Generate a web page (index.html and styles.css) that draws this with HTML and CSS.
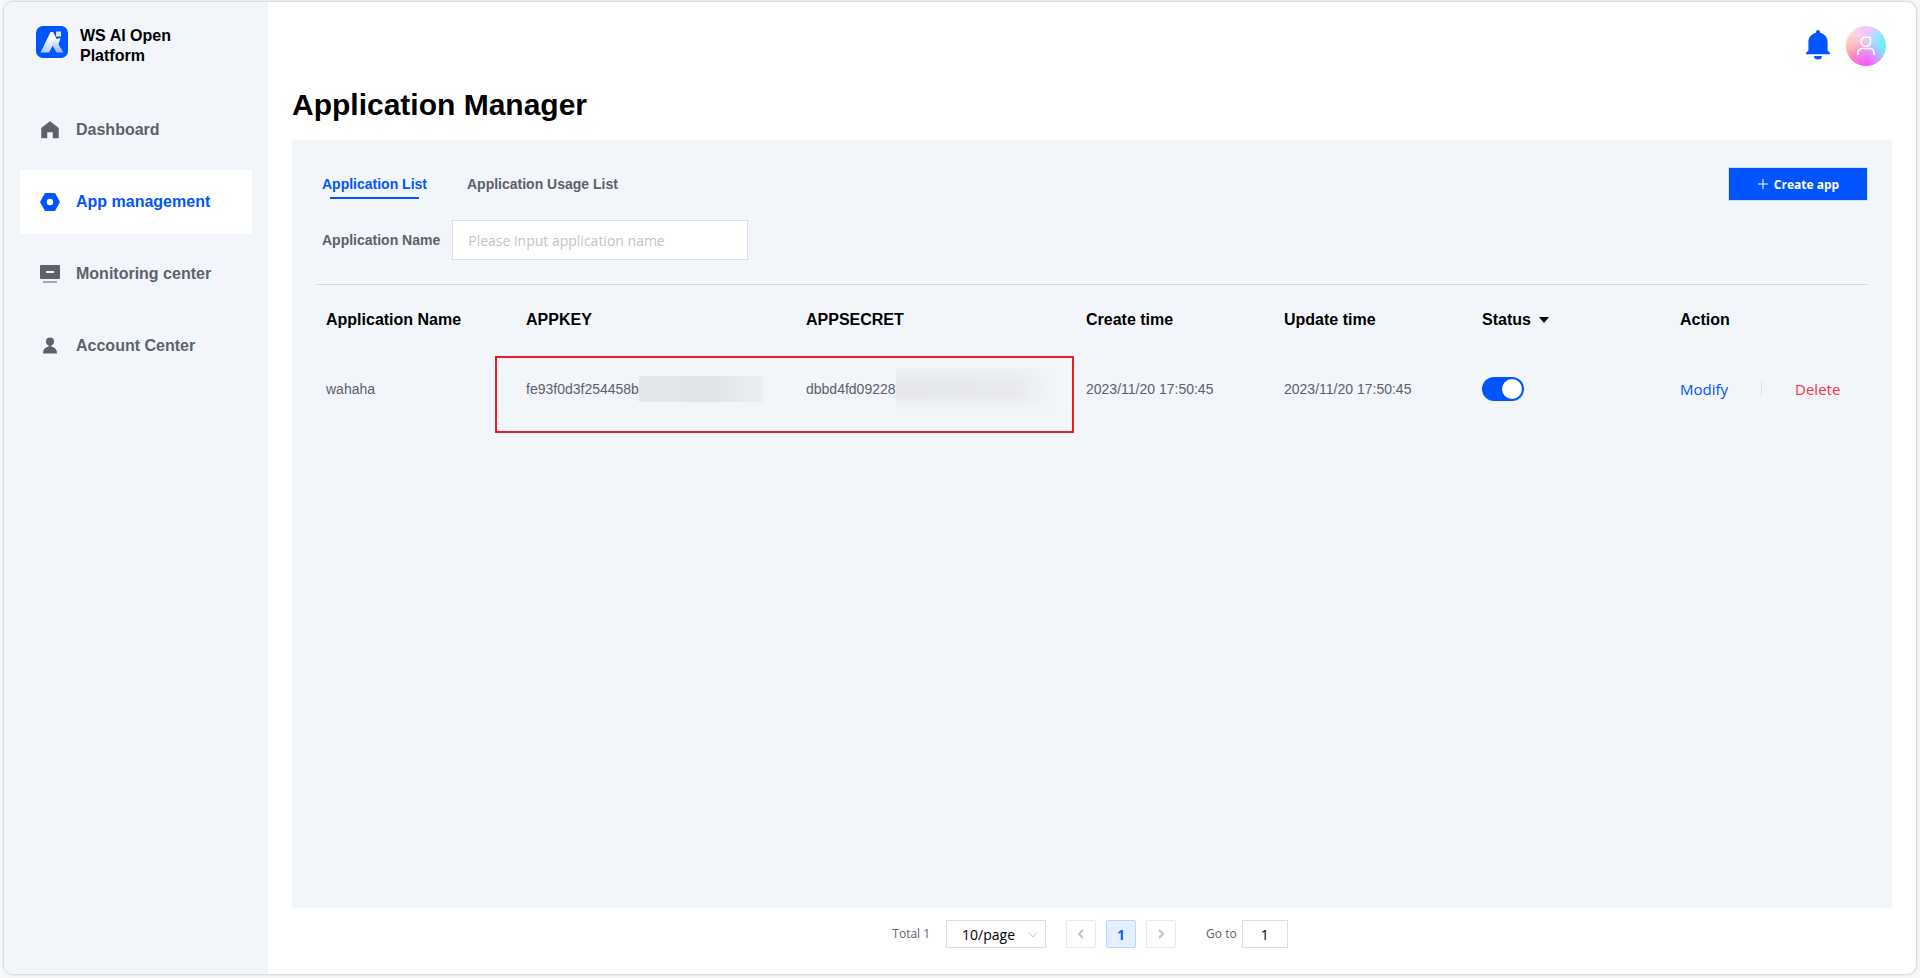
FILE: index.html
```html
<!DOCTYPE html>
<html lang="en">
<head>
<meta charset="utf-8">
<title>Application Manager</title>
<link rel="stylesheet" href="styles.css">
</head>
<body>
<div class="frame">
  <aside class="sidebar">
    <div class="brand">
      <svg class="brand-logo" viewBox="0 0 32 32" aria-hidden="true">
        <defs>
          <linearGradient id="peak" x1="0.8" y1="0" x2="0.2" y2="1">
            <stop offset="0.3" stop-color="#fff"/>
            <stop offset="1" stop-color="#a9c5ff"/>
          </linearGradient>
          <linearGradient id="leg" x1="0" y1="0" x2="0" y2="1">
            <stop offset="0" stop-color="#fff"/>
            <stop offset="1" stop-color="#8fb4ff"/>
          </linearGradient>
        </defs>
        <rect width="32" height="32" rx="7" fill="#05f"/>
        <path d="M14.500 6h2.500l3.500 6.500L17 19l-4 7.500H4.500z" fill="url(#peak)"/>
        <path d="M24.500 12L22.500 18.500l5 8h-7L15.500 18l2-4z" fill="url(#leg)"/>
        <rect x="20" y="5.500" width="5" height="5" fill="#d9e6ff"/>
      </svg>
      <div class="brand-name">WS AI Open Platform</div>
    </div>
    <nav class="nav">
      <a class="nav-item" href="#">
        <svg class="nav-icon" viewBox="0 0 20 20" aria-hidden="true"><path d="M10 1.500l8.500 6.500v10h-5.500v-6h-6v6H1.500V8z" fill="#5c616b" stroke="#5c616b" stroke-width="0.500" stroke-linejoin="round"/></svg>
        Dashboard
      </a>
      <a class="nav-item nav-item-active" href="#">
        <svg class="nav-icon" viewBox="0 0 20 20" aria-hidden="true"><path fill-rule="evenodd" d="M5 1h10l5 9-5 9H5l-5-9zM10 6.800a3.200 3.200 0 1 0 0 6.400 3.200 3.200 0 0 0 0-6.400z" fill="#05f"/></svg>
        App management
      </a>
      <a class="nav-item" href="#">
        <svg class="nav-icon" viewBox="0 0 20 20" aria-hidden="true"><path fill-rule="evenodd" d="M1 1h18a1 1 0 0 1 1 1v12a1 1 0 0 1-1 1H1a1 1 0 0 1-1-1V2a1 1 0 0 1 1-1zM6 7v2h8V7z" fill="#5c616b"/><rect x="3" y="17" width="14" height="2" fill="#a3a7b0"/></svg>
        Monitoring center
      </a>
      <a class="nav-item" href="#">
        <svg class="nav-icon" viewBox="0 0 20 20" aria-hidden="true"><circle cx="10" cy="5.500" r="4" fill="#5c616b"/><path d="M9 8h2l.5 2.500c3.500 1 5.500 3 5.500 7H3c0-4 2-6 5.500-7z" fill="#5c616b"/></svg>
        Account Center
      </a>
    </nav>
  </aside>

  <main class="main">
    <header class="topbar">
      <button class="icon-button" type="button" aria-label="Notifications">
        <svg class="bell" viewBox="0 0 24 32" aria-hidden="true"><path d="M10 2a2 2 0 0 1 4 0v.8c4.500 1 7.600 4.600 7.600 9.200v8.500L24 23v1.300H0V23l2.400-2.500V12c0-4.600 3.100-8.200 7.600-9.200z" fill="#05f"/><path d="M8 26h8a4 3.500 0 0 1-8 0z" fill="#05f"/></svg>
      </button>
      <button class="icon-button avatar" type="button" aria-label="Account">
        <svg class="avatar-icon" viewBox="0 0 18 20" fill="none" stroke="#fff" stroke-width="1.500" aria-hidden="true"><path d="M4 5.500A4.500 4.500 0 0 1 8.500 1.200H13.500V5.500A4.700 4.700 0 0 1 4 5.500z"/><path d="M1 19v-2.500a4 4 0 0 1 4-4h8a4 4 0 0 1 4 4V19"/></svg>
      </button>
    </header>

    <h1 class="title">Application Manager</h1>

    <section class="panel">
      <div class="panel-head">
        <div class="tabs">
          <a class="tab tab-active" href="#">Application List</a>
          <a class="tab" href="#">Application Usage List</a>
        </div>
        <button class="create" type="button">
          <svg class="plus" viewBox="0 0 12 12" aria-hidden="true"><path d="M6 1v10M1 6h10" stroke="#fff"/></svg>
          Create app
        </button>
      </div>
      <div class="filter">
        <label class="filter-label" for="app-name">Application Name</label>
        <input class="filter-input" id="app-name" type="text" placeholder="Please input application name">
      </div>

      <table class="table">
        <colgroup>
          <col class="col-name"><col class="col-key"><col class="col-key"><col><col><col><col>
        </colgroup>
        <thead>
          <tr>
            <th>Application Name</th>
            <th>APPKEY</th>
            <th>APPSECRET</th>
            <th>Create time</th>
            <th>Update time</th>
            <th><button class="sort" type="button">Status <svg class="caret" viewBox="0 0 10 6" aria-hidden="true"><path d="M0 0h10L5 6z"/></svg></button></th>
            <th>Action</th>
          </tr>
        </thead>
        <tbody>
          <tr>
            <td>wahaha</td>
            <td class="key-cell">
              <div class="secret">fe93f0d3f254458b<span class="mask mask-key"></span></div>
              <div class="highlight"></div>
            </td>
            <td><div class="secret">dbbd4fd09228<span class="mask mask-secret"></span></div></td>
            <td>2023/11/20 17:50:45</td>
            <td>2023/11/20 17:50:45</td>
            <td><input class="switch" type="checkbox" aria-label="Status" checked></td>
            <td>
              <div class="actions">
                <a class="action" href="#">Modify</a>
                <span class="separator"></span>
                <a class="action action-danger" href="#">Delete</a>
              </div>
            </td>
          </tr>
        </tbody>
      </table>
    </section>

    <footer class="pagination">
      <span class="total">Total 1</span>
      <div class="size">
        <select class="size-select" aria-label="Rows per page"><option>10/page</option></select>
        <svg class="chevron" viewBox="0 0 10 6" fill="none" stroke="#c0c4cc" aria-hidden="true"><path d="M1 .5l4 4.500 4-4.500"/></svg>
      </div>
      <div class="pages">
        <button class="page" type="button" aria-label="Previous page"><svg class="arrow" viewBox="0 0 6 10" aria-hidden="true"><path d="M5 1L1 5l4 4"/></svg></button>
        <button class="page page-current" type="button">1</button>
        <button class="page" type="button" aria-label="Next page"><svg class="arrow" viewBox="0 0 6 10" aria-hidden="true"><path d="M1 1l4 4-4 4"/></svg></button>
      </div>
      <label class="goto" for="goto">Go to</label>
      <input class="goto-input" id="goto" type="text" value="1">
    </footer>
  </main>
</div>
</body>
</html>
```

FILE: styles.css
```css
* { box-sizing: border-box; }

body {
  margin: 0;
  min-height: 100vh;
  display: flex;
  padding: 2px 4px 4px;
  background: #f7f7f7;
  color: #5c616b;
  font: 14px/20px "Liberation Sans", Arial, sans-serif;
}

a { color: inherit; text-decoration: none; }
button, input, select { margin: 0; padding: 0; border-radius: 0; font: inherit; color: inherit; }
svg { display: block; flex: none; }

.frame {
  flex: 1;
  display: flex;
  overflow: hidden;
  border-radius: 9px;
  background: #fff;
  box-shadow: 0 0 3px rgba(0, 0, 0, 0.3);
}

/* Sidebar */
.sidebar { flex: none; width: 264px; background: #f2f5fa; }
.brand { display: flex; gap: 12px; padding: 24px 32px 0; }
.brand-logo { width: 32px; height: 32px; }
.brand-name { max-width: 120px; color: #000; font-size: 16px; font-weight: bold; line-height: 20px; }
.nav { display: flex; flex-direction: column; gap: 8px; padding: 32px 16px 0; }
.nav-item {
  display: flex;
  align-items: center;
  gap: 16px;
  height: 64px;
  padding: 0 20px;
  font-size: 16px;
  font-weight: bold;
}
.nav-item-active { background: #fff; color: #05f; }
.nav-icon { width: 20px; height: 20px; }

/* Main area */
.main { flex: 1; min-width: 0; display: flex; flex-direction: column; padding: 24px 24px 26px; }
.topbar { display: flex; justify-content: flex-end; align-items: center; gap: 16px; padding-right: 6px; }
.icon-button { border: 0; background: none; }
.bell { width: 24px; height: 32px; }
.avatar {
  width: 40px;
  height: 40px;
  display: grid;
  place-items: center;
  border-radius: 50%;
  background:
    radial-gradient(circle at 50% 100%, #f050ff 0%, rgba(240, 80, 255, 0) 55%),
    radial-gradient(circle at 100% 50%, #5ff0ff 0%, rgba(110, 220, 255, 0) 50%),
    radial-gradient(circle at 10% 80%, #ffa090 0%, rgba(255, 180, 150, 0) 50%),
    linear-gradient(90deg, #ffe0cc, #f5c4ff 50%, #b0e0ff);
}
.avatar-icon { width: 18px; height: 20px; }
.title { margin: 21px 0 17px; color: #000; font-size: 30px; line-height: 36px; }

.panel { flex: 1; padding: 27px 24px; background: #f2f5fa; }
.panel-head { display: flex; justify-content: space-between; align-items: flex-start; padding-left: 6px; }
.tabs { display: flex; gap: 40px; padding-top: 7px; }
.tab { position: relative; font-weight: bold; }
.tab-active { color: #05f; }
.tab-active::after {
  content: "";
  position: absolute;
  left: 8px;
  right: 8px;
  bottom: -5px;
  height: 2px;
  background: #05f;
}
.create {
  display: flex;
  align-items: center;
  justify-content: center;
  gap: 5px;
  width: 140px;
  height: 34px;
  border: 1px solid #dcdfe6;
  background: #05f;
  color: #fff;
  font: bold 12px "Open Sans", sans-serif;
}
.plus { width: 12px; height: 12px; }

.filter { display: flex; align-items: center; gap: 12px; padding: 19px 6px 24px; border-bottom: 1px solid #d3d7df; }
.filter-label { font-weight: bold; }
.filter-input {
  width: 296px;
  height: 40px;
  padding: 0 15px;
  border: 1px solid #dcdfe6;
  background: #fff;
  font: 14px "Open Sans", sans-serif;
}
.filter-input::placeholder { color: #c0c4cc; opacity: 1; }

/* Application table */
.table { width: 100%; table-layout: fixed; border-collapse: collapse; text-align: left; }
.col-name { width: 200px; }
.col-key { width: 280px; }
.table th { height: 69px; padding: 0 10px; color: #000; font-size: 16px; }
.table td { height: 70px; padding: 0 10px; white-space: nowrap; }
.sort { display: flex; align-items: center; gap: 8px; border: 0; background: none; font-weight: bold; }
.caret { width: 10px; height: 6px; }
.key-cell { position: relative; }
.highlight {
  position: absolute;
  top: 2px;
  left: -21px;
  width: calc(200% + 19px);
  height: 77px;
  border: 2px solid #ed1c24;
}
.secret { display: flex; align-items: center; height: 42px; }
.mask { flex: none; }
.mask-key { width: 124px; height: 26px; background: linear-gradient(90deg, #e3e6eb, #e1e4e9 60%, #ebeef3); }
.mask-secret {
  width: 160px;
  height: 42px;
  background:
    linear-gradient(180deg, rgba(242, 245, 250, 0.6), rgba(242, 245, 250, 0) 40%, rgba(242, 245, 250, 0) 65%, #f2f5fa),
    linear-gradient(90deg, #e5e7ec, #e8eaef 75%, #f2f5fa);
}
.switch {
  appearance: none;
  display: block;
  width: 42px;
  height: 24px;
  padding: 2px;
  border-radius: 12px;
  background: #c0c4cc;
}
.switch::before { content: ""; display: block; width: 20px; height: 20px; border-radius: 50%; background: #fff; }
.switch:checked { background: #05f; }
.switch:checked::before { margin-left: auto; }
.actions { display: flex; align-items: center; }
.action { color: #05f; font: 15px/20px "Open Sans", sans-serif; }
.action-danger { color: #ff3141; }
.separator { width: 1px; height: 14px; margin: 0 33px; background: #dcdfe6; }

/* Pagination */
.pagination { display: flex; justify-content: center; align-items: center; padding: 12px 4px 0 0; }
.total, .goto { font: 12px/20px "Open Sans", sans-serif; }
.size { position: relative; margin: 0 20px 0 16px; }
.size-select {
  appearance: none;
  display: block;
  width: 100px;
  height: 28px;
  padding: 0 15px;
  border: 1px solid #dcdfe6;
  background: #fff;
  color: #000;
  font: 14px "Open Sans", sans-serif;
}
.chevron { position: absolute; top: 12px; right: 8px; width: 10px; height: 6px; pointer-events: none; }
.pages { display: flex; gap: 10px; }
.page {
  display: grid;
  place-items: center;
  width: 30px;
  height: 28px;
  border: 1px solid #e9eaee;
  border-radius: 2px;
  background: #fff;
}
.page-current { border-color: #b8d8ff; background: #e3f0ff; color: #0b64ff; font: bold 14px "Open Sans", sans-serif; }
.arrow { width: 6px; height: 10px; fill: none; stroke: #c0c4cc; stroke-width: 2; }
.goto { margin: 0 5px 0 30px; }
.goto-input { width: 46px; height: 28px; border: 1px solid #dcdfe6; background: #fff; color: #000; font: 14px "Open Sans", sans-serif; text-align: center; }
```
